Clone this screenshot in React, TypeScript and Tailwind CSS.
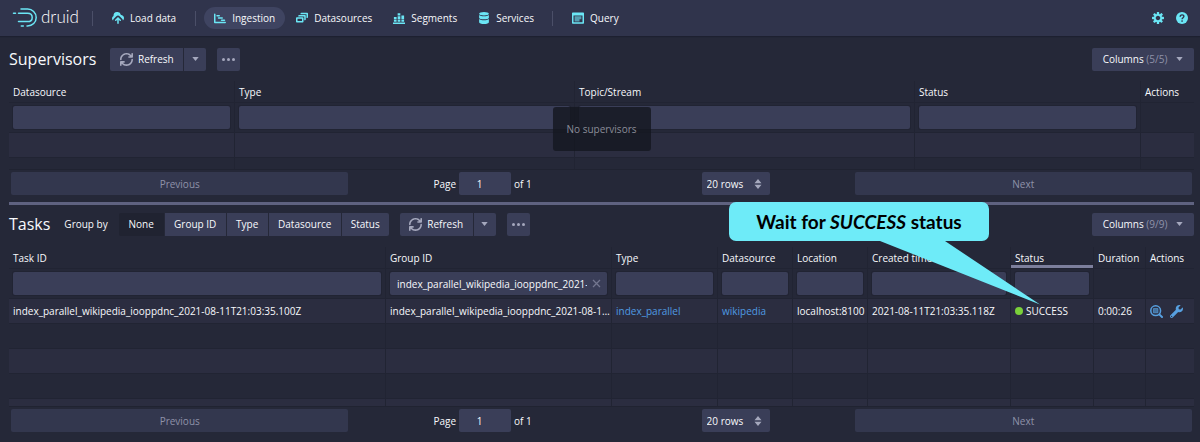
import type { ReactNode } from "react";
import { FaWrench } from "react-icons/fa";

const PATHS = {
  upload:
    "M8.71 7.29C8.53 7.11 8.28 7 8 7s-.53.11-.71.29l-3 3a1.003 1.003 0 001.42 1.42L7 10.41V15c0 .55.45 1 1 1s1-.45 1-1v-4.59l1.29 1.3a1.003 1.003 0 001.42-1.42l-3-3zM12 4c-.03 0-.07 0-.1.01A5 5 0 002 5c0 .11.01.22.02.33A3.51 3.51 0 000 8.5c0 1.16.56 2.18 1.43 2.82.06-.87.42-1.7 1.04-2.32l3-3a3.5 3.5 0 015.06 0l3 3c.6.6.96 1.4 1.03 2.22A3.98 3.98 0 0016 8c0-2.21-1.79-4-4-4z",
  gantt:
    "M4 6h3c.55 0 1-.45 1-1s-.45-1-1-1H4c-.55 0-1 .45-1 1s.45 1 1 1zm1 2c0 .55.45 1 1 1h5c.55 0 1-.45 1-1s-.45-1-1-1H6c-.55 0-1 .45-1 1zm10 5H2V3c0-.55-.45-1-1-1s-1 .45-1 1v11c0 .55.45 1 1 1h14c.55 0 1-.45 1-1s-.45-1-1-1zm-6-2c0 .55.45 1 1 1h4c.55 0 1-.45 1-1s-.45-1-1-1h-4c-.55 0-1 .45-1 1z",
  multi:
    "M12 3.98H4c-.55 0-1 .45-1 1v1h8v5h1c.55 0 1-.45 1-1v-5c0-.55-.45-1-1-1zm3-3H7c-.55 0-1 .45-1 1v1h8v5h1c.55 0 1-.45 1-1v-5c0-.55-.45-1-1-1zm-6 6H1c-.55 0-1 .45-1 1v5c0 .55.45 1 1 1h8c.55 0 1-.45 1-1v-5c0-.55-.45-1-1-1zm-1 5H2v-3h6v3z",
  chart:
    "M0 14h16v2H0zM1.200 10h3.600v3H1.200zM1.200 6.500h3.600v2.700H1.200zM6.200 10h3.600v3H6.200zM6.200 5.500h3.600v3.700H6.200zM6.200 1.500h3.600v3.200H6.200zM11.200 10h3.600v3h-3.600zM11.200 4.500h3.600v4.700h-3.600z",
  database:
    "M8 0C4.410 0 1.500 1 1.500 2.200S4.410 4.500 8 4.500s6.500-1.100 6.500-2.300S11.590 0 8 0zM1.500 4v3.500C1.500 8.700 4.410 9.800 8 9.800s6.500-1.100 6.500-2.300V4c-1.200 1.100-3.700 1.700-6.500 1.700S2.700 5.100 1.500 4zM1.500 9.300v4.200c0 1.400 2.910 2.500 6.500 2.500s6.500-1.100 6.500-2.500V9.300C13.300 10.400 10.800 11 8 11s-5.300-.6-6.500-1.700z",
  cog: "M15.19 6.39h-1.85c-.11-.37-.27-.71-.45-1.04l1.36-1.36c.31-.31.31-.82 0-1.13l-1.13-1.13a.803.803 0 00-1.13 0l-1.36 1.36c-.33-.17-.67-.33-1.04-.44V.79c0-.44-.36-.8-.8-.8h-1.6c-.44 0-.8.36-.8.8v1.86c-.39.12-.75.28-1.1.47l-1.3-1.3c-.3-.3-.79-.3-1.09 0L1.82 2.91c-.3.3-.3.79 0 1.09l1.3 1.3c-.2.34-.36.7-.48 1.09H.79c-.44 0-.8.36-.8.8v1.6c0 .44.36.8.8.8h1.85c.11.37.27.71.45 1.04l-1.36 1.36c-.31.31-.31.82 0 1.13l1.13 1.13c.31.31.82.31 1.13 0l1.36-1.36c.33.18.67.33 1.04.44v1.86c0 .44.36.8.8.8h1.6c.44 0 .8-.36.8-.8v-1.86c.39-.12.75-.28 1.1-.47l1.3 1.3c.3.3.79.3 1.09 0l1.09-1.09c.3-.3.3-.79 0-1.09l-1.3-1.3c.19-.35.36-.71.48-1.1h1.85c.44 0 .8-.36.8-.8v-1.6a.816.816 0 00-.81-.79zm-7.2 4.6c-1.66 0-3-1.34-3-3s1.34-3 3-3 3 1.34 3 3-1.34 3-3 3z",
  refresh:
    "M14.99 6.99c-.55 0-1 .45-1 1 0 3.31-2.69 6-6 6-1.77 0-3.36-.78-4.46-2h1.46c.55 0 1-.45 1-1s-.45-1-1-1h-4c-.55 0-1 .45-1 1v4c0 .55.45 1 1 1s1-.45 1-1v-1.74a7.95 7.95 0 006 2.74c4.42 0 8-3.58 8-8 0-.55-.45-1-1-1zm0-7c-.55 0-1 .45-1 1v1.74a7.95 7.95 0 00-6-2.74c-4.42 0-8 3.58-8 8 0 .55.45 1 1 1s1-.45 1-1c0-3.31 2.69-6 6-6 1.77 0 3.36.78 4.46 2h-1.46c-.55 0-1 .45-1 1s.45 1 1 1h4c.55 0 1-.45 1-1v-4c0-.55-.45-1-1-1z",
};

function Icon({ name, className = "size-3" }: { name: keyof typeof PATHS; className?: string }) {
  return (
    <svg viewBox="0 0 16 16" className={`shrink-0 ${className}`} fill="currentColor" aria-hidden="true">
      <path fillRule="evenodd" d={PATHS[name]} />
    </svg>
  );
}

function QueryIcon() {
  return (
    <svg viewBox="0 0 16 16" className="size-3 shrink-0" fill="currentColor" aria-hidden="true">
      <path
        fillRule="evenodd"
        d="M1 .5h14a1 1 0 011 1v13a1 1 0 01-1 1H1a1 1 0 01-1-1v-13a1 1 0 011-1zM2 4.500v9h12v-9z"
      />
      <path opacity=".6" d="M3.500 5.500h9v4h-2.500v3H3.500z" />
    </svg>
  );
}

function HelpIcon() {
  return (
    <svg viewBox="0 0 16 16" className="size-3" aria-hidden="true">
      <circle cx="8" cy="8" r="8" fill="currentColor" />
      <path d="M5.600 6.200C5.600 3 10.700 3 10.500 6.100 10.400 7.600 8.100 7.700 8.100 9.700" fill="none" stroke="#30344c" strokeWidth="1.900" />
      <circle cx="8.100" cy="12" r="1.150" fill="#30344c" />
    </svg>
  );
}

function Caret() {
  return (
    <svg viewBox="0 0 7 4" className="h-1 w-[7px] shrink-0" fill="#a5a8bd" aria-hidden="true">
      <path d="M.3 0h6.400L3.500 4z" />
    </svg>
  );
}

function Logo() {
  return (
    <a href="#home" className="flex items-center gap-[3px] pb-[3px]" aria-label="druid">
      <svg viewBox="0 0 26 20" className="h-5 w-[26px]" fill="none" stroke="#6be6f5" strokeWidth="1.500" strokeLinecap="round" aria-hidden="true">
        <path d="M9 2h6.500a8.500 8.500 0 018.700 8.500c0 4.900-3.700 8.400-8.700 8.400h-.5M9.300 18.900h2" />
        <path d="M6.500 6.200h9c3 0 4.700 1.700 4.700 4.200s-1.700 4.200-4.700 4.200H6.500M1.500 6.200h2" />
      </svg>
      <span className="font-[Lato] text-[17px] leading-5 font-light text-white">druid</span>
    </a>
  );
}

function NavItem({ icon, label, active = false }: { icon: ReactNode; label: string; active?: boolean }) {
  return (
    <a
      href={`#${label.toLowerCase().replace(" ", "-")}`}
      className={`flex h-[22px] items-center gap-[6px] rounded-full px-[10px] text-[#6be6f5] ${active ? "bg-[#3f4461]" : ""}`}
    >
      {icon}
      <span className="text-[#f8f9fc]">{label}</span>
    </a>
  );
}

const Divider = () => <span className="h-[15px] w-px bg-[#4b4f68]" />;

const BTN = "flex h-[23px] items-center justify-center bg-[#3a3e58] text-[#f8f9fc]";

function RefreshGroup() {
  return (
    <div className="flex items-center gap-[11px]">
      <div className="flex gap-px">
        <button type="button" className={`${BTN} w-[73px] gap-[5px] rounded-l-[2px]`}>
          <Icon name="refresh" className="size-[13px] text-[#a5a8bd]" />
          Refresh
        </button>
        <button type="button" aria-label="Refresh options" className={`${BTN} w-[22px] rounded-r-[2px]`}>
          <Caret />
        </button>
      </div>
      <button type="button" aria-label="More" className={`${BTN} w-[23px] gap-[2px] rounded-[2px]`}>
        <i className="size-[3px] rounded-full bg-[#a5a8bd]" />
        <i className="size-[3px] rounded-full bg-[#a5a8bd]" />
        <i className="size-[3px] rounded-full bg-[#a5a8bd]" />
      </button>
    </div>
  );
}

function ColumnsButton({ count }: { count: string }) {
  return (
    <button type="button" className={`${BTN} ml-auto w-[102px] gap-[9px] rounded-[2px]`}>
      <span>
        Columns <span className="text-[#8f92a9]">({count})</span>
      </span>
      <Caret />
    </button>
  );
}

function Pager({ id }: { id: string }) {
  return (
    <div className="flex shrink-0 items-center border-t border-[#202331] px-[2px] pt-[2px]">
      <button type="button" disabled className="h-[23px] flex-1 rounded-[2px] bg-[#33374e] text-[#8f92a9]">
        Previous
      </button>
      <div className="flex flex-[1.5] items-center justify-around">
        <div className="flex items-center gap-[3px]">
          <label htmlFor={`${id}-page`}>Page</label>
          <input
            id={`${id}-page`}
            defaultValue="1"
            className="h-[23px] w-[52px] rounded-[2px] bg-[#3a3e58] pr-[11px] text-center outline-none"
          />
          <span>of 1</span>
        </div>
        <div className="relative">
          <select
            aria-label="Rows per page"
            className="h-[23px] w-[68px] appearance-none rounded-[2px] bg-[#3a3e58] pl-[5px] outline-none"
          >
            <option>20 rows</option>
          </select>
          <svg viewBox="0 0 8 10" className="pointer-events-none absolute top-[7px] right-2 h-[10px] w-2" fill="#a5a8bd" aria-hidden="true">
            <path d="M4 0l3.500 4.200H.5zM4 10L.5 5.800h7z" />
          </svg>
        </div>
      </div>
      <button type="button" disabled className="h-[23px] flex-1 rounded-[2px] bg-[#33374e] text-[#8f92a9]">
        Next
      </button>
    </div>
  );
}

type Column = { name: string; width: string; filter?: boolean; value?: string; sorted?: boolean };

const SUPERVISOR_COLUMNS: Column[] = [
  { name: "Datasource", width: "w-[226px]", filter: true },
  { name: "Type", width: "w-[340px]", filter: true },
  { name: "Topic/Stream", width: "w-[340px]", filter: true },
  { name: "Status", width: "w-[226px]", filter: true },
  { name: "Actions", width: "w-[53px]" },
];

const TASK_COLUMNS: Column[] = [
  { name: "Task ID", width: "w-[377px]", filter: true },
  { name: "Group ID", width: "w-[226px]", filter: true, value: "index_parallel_wikipedia_iooppdnc_2021-" },
  { name: "Type", width: "w-[106px]", filter: true },
  { name: "Datasource", width: "w-[75px]", filter: true },
  { name: "Location", width: "w-[75px]", filter: true },
  { name: "Created time", width: "w-[143px]", filter: true },
  { name: "Status", width: "w-[83px]", filter: true, sorted: true },
  { name: "Duration", width: "w-[52px]" },
  { name: "Actions", width: "w-[48px]" },
];

const CELL = "border-r border-[#212433] pl-1 last:border-r-0";

function DataTable({ columns, rows, label }: { columns: Column[]; rows: ReactNode[][]; label: string }) {
  return (
    <table aria-label={label} className="w-full table-fixed border-separate border-spacing-0 text-left">
      <colgroup>
        {columns.map((c) => (
          <col key={c.name} className={c.width} />
        ))}
      </colgroup>
      <thead>
        <tr className="h-[22px]">
          {columns.map((c) => (
            <th
              key={c.name}
              scope="col"
              className={`${CELL} border-b font-normal whitespace-nowrap ${c.sorted ? "shadow-[inset_0_-3px_0_0_#7c7f9c]" : ""}`}
            >
              {c.name}
            </th>
          ))}
        </tr>
        <tr className="h-[30px]">
          {columns.map((c) => (
            <td key={c.name} className={`${CELL} border-b pr-1`}>
              {c.filter && (
                <div className="relative">
                  <input
                    aria-label={`Filter ${c.name}`}
                    defaultValue={c.value}
                    className={`block h-[23px] w-full rounded-[2px] bg-[#3a3e58] pl-[7px] shadow-[0_0_0_1px_#212433] outline-none ${c.value ? "pr-5" : "pr-1"}`}
                  />
                  {c.value && (
                    <button type="button" aria-label="Clear filter" className="absolute top-[7px] right-[6px]">
                      <svg viewBox="0 0 9 9" className="size-[9px]" stroke="#73768f" strokeWidth="1.300" aria-hidden="true">
                        <path d="M1 1l7 7M8 1L1 8" />
                      </svg>
                    </button>
                  )}
                </div>
              )}
            </td>
          ))}
        </tr>
      </thead>
      <tbody>
        {rows.map((row, i) => (
          <tr key={i} className="h-[25px] odd:bg-[#2b2d40]">
            {columns.map((c, j) => (
              <td key={c.name} className={`${CELL} truncate border-b`}>
                {row[j]}
              </td>
            ))}
          </tr>
        ))}
      </tbody>
    </table>
  );
}

function TaskActions() {
  return (
    <div className="flex items-center gap-[7px] text-[#57a0e0]">
      <button type="button" aria-label="Details">
        <svg viewBox="0 0 16 16" className="block size-[13px]" fill="none" stroke="currentColor" aria-hidden="true">
          <circle cx="7" cy="7" r="6" strokeWidth="1.900" />
          <path d="M11.500 11.500l3.300 3.300" strokeWidth="2.400" strokeLinecap="round" />
          <path d="M4.200 4.400h5.600v5.200H4.200z" fill="currentColor" fillOpacity=".6" strokeWidth=".8" />
        </svg>
      </button>
      <button type="button" aria-label="Actions">
        <FaWrench className="size-[13px]" />
      </button>
    </div>
  );
}

const TASK_ROWS: ReactNode[][] = [
  [
    "index_parallel_wikipedia_iooppdnc_2021-08-11T21:03:35.100Z",
    "index_parallel_wikipedia_iooppdnc_2021-08-11T21:03:35.100Z",
    <a href="#type" className="text-[#4f9be2]">index_parallel</a>,
    <a href="#datasource" className="text-[#4f9be2]">wikipedia</a>,
    "localhost:8100",
    "2021-08-11T21:03:35.118Z",
    <span className="flex items-center gap-[3px]">
      <i className="size-2 rounded-full bg-[#7ad03a]" />
      SUCCESS
    </span>,
    "0:00:26",
    <TaskActions />,
  ],
  [],
  [],
  [],
  [],
];

function Callout() {
  return (
    <div className="absolute top-[-3px] right-[205px] h-[39px] w-[260px]">
      <svg viewBox="0 0 312 103" className="absolute top-0 left-0 h-[103px] w-[312px]" fill="#6eebf8" aria-hidden="true">
        <path d="M7 0h246a7 7 0 017 7v25a7 7 0 01-7 7h-37l95 63.500L151 39H7a7 7 0 01-7-7V7a7 7 0 017-7z" />
      </svg>
      <p className="relative text-center font-[Lato] text-[19px] leading-[39px] font-bold text-black">
        Wait for <em>SUCCESS</em> status
      </p>
    </div>
  );
}

export default function App() {
  return (
    <div className="flex h-screen min-h-[442px] flex-col bg-[#252838] font-['Open_Sans',sans-serif] text-[10px] leading-4 text-[#f8f9fc]">
      <header className="flex h-9 shrink-0 items-center bg-[#30344c] px-3 shadow-[0_1px_1px_#1d2030]">
        <Logo />
        <nav className="ml-[13px] flex items-center">
          <Divider />
          <div className="mx-[9px]">
            <NavItem icon={<Icon name="upload" />} label="Load data" />
          </div>
          <Divider />
          <div className="mx-2 flex items-center gap-px">
            <NavItem icon={<Icon name="gantt" />} label="Ingestion" active />
            <NavItem icon={<Icon name="multi" />} label="Datasources" />
            <NavItem icon={<Icon name="chart" />} label="Segments" />
            <NavItem icon={<Icon name="database" />} label="Services" />
          </div>
          <Divider />
          <div className="ml-[9px]">
            <NavItem icon={<QueryIcon />} label="Query" />
          </div>
        </nav>
        <div className="ml-auto flex items-center gap-3 text-[#6be6f5]">
          <button type="button" aria-label="Settings">
            <Icon name="cog" />
          </button>
          <button type="button" aria-label="Help">
            <HelpIcon />
          </button>
        </div>
      </header>

      <main className="flex min-h-0 flex-1 flex-col pr-[6px] pb-[10px] pl-[9px]">
        <section className="flex shrink-0 flex-col">
          <div className="flex items-center pt-[11px]">
            <h2 className="mr-[14px] text-base leading-6">Supervisors</h2>
            <RefreshGroup />
            <ColumnsButton count="5/5" />
          </div>
          <div className="relative mt-[10px] h-[88px] overflow-hidden">
            <DataTable label="Supervisors" columns={SUPERVISOR_COLUMNS} rows={[[], []]} />
            <div className="absolute top-[26px] left-1/2 -translate-x-1/2 rounded-[3px] bg-[#14161f]/80 px-[14px] py-[14px] whitespace-nowrap text-[#8b8d99]">
              No supervisors
            </div>
          </div>
          <Pager id="supervisors" />
        </section>

        <div role="separator" className="mt-[7px] h-[3px] shrink-0 bg-[#5f6280]" />

        <section className="relative flex min-h-0 flex-1 flex-col">
          <div className="flex items-center pt-[7px]">
            <h2 className="mr-[14px] text-base leading-6">Tasks</h2>
            <span className="mr-[11px]">Group by</span>
            <div className="mr-[11px] flex gap-px">
              <button type="button" className="h-[23px] w-[45px] rounded-l-[2px] bg-[#202331]">None</button>
              <button type="button" className={`${BTN} w-[61px]`}>Group ID</button>
              <button type="button" className={`${BTN} w-[41px]`}>Type</button>
              <button type="button" className={`${BTN} w-[72px]`}>Datasource</button>
              <button type="button" className={`${BTN} w-[47px] rounded-r-[2px]`}>Status</button>
            </div>
            <RefreshGroup />
            <ColumnsButton count="9/9" />
          </div>
          <div className="mt-[11px] min-h-0 flex-1 overflow-hidden">
            <DataTable label="Tasks" columns={TASK_COLUMNS} rows={TASK_ROWS} />
          </div>
          <Pager id="tasks" />
          <Callout />
        </section>
      </main>
    </div>
  );
}
